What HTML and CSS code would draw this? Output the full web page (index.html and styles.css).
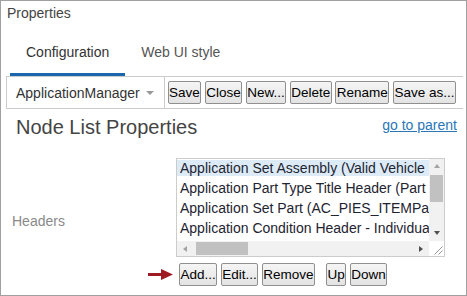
FILE: index.html
```html
<!DOCTYPE html>
<html lang="en">
<head>
  <meta charset="UTF-8">
  <meta name="viewport" content="width=device-width, initial-scale=1.0">
  <title>Properties</title>
  <link rel="stylesheet" href="styles.css">
</head>
<body>
  <div class="panel">
    <div class="panel-title">Properties</div>

    <div class="tabs">
      <span class="tab active">Configuration</span>
      <span class="tab">Web UI style</span>
    </div>

    <div class="toolbar">
      <div class="combo">
        <span>ApplicationManager</span>
        <i class="caret"></i>
      </div>
      <button>Save</button>
      <button>Close</button>
      <button>New...</button>
      <button>Delete</button>
      <button>Rename</button>
      <button>Save as...</button>
    </div>

    <div class="section-head">
      <h2>Node List Properties</h2>
      <a href="#">go to parent</a>
    </div>

    <div class="field">
      <label>Headers</label>
      <div class="listbox">
        <div class="list-view">
          <ul>
            <li class="selected">Application Set Assembly (Valid Vehicle Configuration)</li>
            <li>Application Part Type Title Header (Part Type Description)</li>
            <li>Application Set Part (AC_PIES_ITEMPartApplicationSetPart)</li>
            <li>Application Condition Header - Individual Application Condition Attributes (AC_PIES_ITEMPartApplicationConditionHeader)</li>
            <li>Application Note Header (Footnote)</li>
            <li>Application Qualifier Header (Qualifier Text)</li>
            <li>Application Position Header (Position)</li>
            <li>Application Quantity Header (Quantity per Application)</li>
          </ul>
        </div>
        <!-- scrollbars drawn by hand, the browser hides its own -->
        <div class="vscroll">
          <span class="arrow up"></span>
          <span class="thumb"></span>
          <span class="arrow down"></span>
        </div>
        <div class="hscroll">
          <span class="arrow left"></span>
          <span class="thumb"></span>
          <span class="arrow right"></span>
        </div>
        <div class="corner">
          <svg width="15" height="15" viewBox="0 0 15 15">
            <path d="M13.5 5.5 L5.5 13.5 M13.5 9.5 L9.5 13.5" stroke="#9a9a9a" stroke-width="1" fill="none"/>
          </svg>
        </div>
      </div>
    </div>

    <div class="actions">
      <!-- pointer to the add button -->
      <svg class="pointer" width="25" height="11" viewBox="0 0 25 11">
        <polygon points="0,4 13,4 13,0 25,5.5 13,11 13,7 0,7" fill="#9e1b24"/>
      </svg>
      <button>Add...</button>
      <button>Edit...</button>
      <button>Remove</button>
      <button class="up">Up</button>
      <button>Down</button>
    </div>
  </div>
</body>
</html>
```

FILE: styles.css
```css
* {
  margin: 0;
  padding: 0;
}

body {
  font-family: "Liberation Sans", Arial, sans-serif;
  color: #333;
}

.panel {
  width: 467px;
  height: 296px;
  box-sizing: border-box;
  border: 1px solid #a0a0a0;
  background-color: #fff;
}

.panel-title {
  padding: 4px 6px 0;
  font-size: 14px;
  line-height: 16px;
  color: #444;
}

/* tabs */
.tabs {
  display: flex;
  margin-left: 9px;
}

.tab {
  padding: 23px 16px 13px;
  font-size: 14px;
  line-height: 16px;
  color: #555;
  border-bottom: 3px solid transparent;
}

.tab.active {
  color: #333;
  border-bottom-color: #1a67ad;
}

/* toolbar */
.toolbar {
  display: flex;
  align-items: center;
  gap: 3.5px;
  height: 33px;
  box-sizing: border-box;
  margin: 0 3px 0 5px;
  border-top: 1px solid #ccc;
  border-bottom: 1px solid #ccc;
}

.combo {
  display: flex;
  align-items: center;
  width: 159px;
  height: 100%;
  box-sizing: border-box;
  padding-left: 9px;
  margin-right: -1px;
  border-left: 1px solid #ccc;
  border-right: 1px solid #ccc;
  font-size: 14px;
  color: #333;
}

.caret {
  margin-left: 6px;
  border-left: 4px solid transparent;
  border-right: 4px solid transparent;
  border-top: 4px solid #999;
}

button {
  font-family: "Liberation Sans", Arial, sans-serif;
  font-size: 13.5px;
  line-height: 15px;
  padding: 3px 0.5px;
  color: #000;
  background: linear-gradient(#f5f5f5, #e3e3e3);
  border: 1px solid #8f8f8f;
  border-radius: 2px;
}

/* heading */
.section-head {
  display: flex;
  justify-content: space-between;
  align-items: flex-start;
  padding: 7px 9px 0 15px;
}

.section-head h2 {
  font-size: 20px;
  font-weight: normal;
  line-height: 23px;
  color: #444;
}

.section-head a {
  margin-top: 1px;
  font-size: 14px;
  line-height: 16px;
  color: #2a76b8;
}

/* list field */
.field {
  display: flex;
  margin-top: 19px;
}

.field label {
  width: 175px;
  box-sizing: border-box;
  padding: 55px 0 0 11px;
  font-size: 14px;
  line-height: 16px;
  color: #8a8a8a;
}

.listbox {
  display: grid;
  grid-template-columns: 1fr 15px;
  grid-template-rows: 1fr 15px;
  width: 269px;
  height: 99px;
  box-sizing: border-box;
  border: 1px solid #ccc;
}

.list-view {
  overflow: hidden;
  padding-top: 1px;
}

.list-view ul {
  list-style: none;
  width: max-content;
}

.list-view li {
  padding: 0 3px;
  margin-bottom: 4px;
  font-size: 14px;
  line-height: 16px;
  white-space: nowrap;
  color: #1e2430;
}

.list-view li.selected {
  background-color: #dcebf7;
}

/* scrollbars */
.vscroll,
.hscroll {
  display: flex;
  align-items: center;
  background-color: #f1f1f1;
}

.vscroll {
  flex-direction: column;
}

.vscroll .up {
  margin: 5px 0 7px;
  border-left: 3.5px solid transparent;
  border-right: 3.5px solid transparent;
  border-bottom: 4px solid #a3a3a3;
}

.vscroll .thumb {
  width: 13px;
  height: 27px;
  background-color: #c1c1c1;
}

.vscroll .down {
  margin: auto 0 6px;
  border-left: 3.5px solid transparent;
  border-right: 3.5px solid transparent;
  border-top: 4px solid #505050;
}

.hscroll .left {
  margin: 0 9px 0 6px;
  border-top: 3.5px solid transparent;
  border-bottom: 3.5px solid transparent;
  border-right: 4px solid #a3a3a3;
}

.hscroll .thumb {
  width: 52px;
  height: 13px;
  background-color: #c1c1c1;
}

.hscroll .right {
  margin: 0 6px 0 auto;
  border-top: 3.5px solid transparent;
  border-bottom: 3.5px solid transparent;
  border-left: 4px solid #505050;
}

.corner {
  background-color: #fff;
}

.corner svg {
  display: block;
}

/* buttons below the list */
.actions {
  display: flex;
  align-items: center;
  gap: 3.5px;
  margin-top: 6px;
  padding-left: 147px;
}

.pointer {
  margin-right: 2.5px;
}

.actions .up {
  margin-left: 7.5px;
}
```
